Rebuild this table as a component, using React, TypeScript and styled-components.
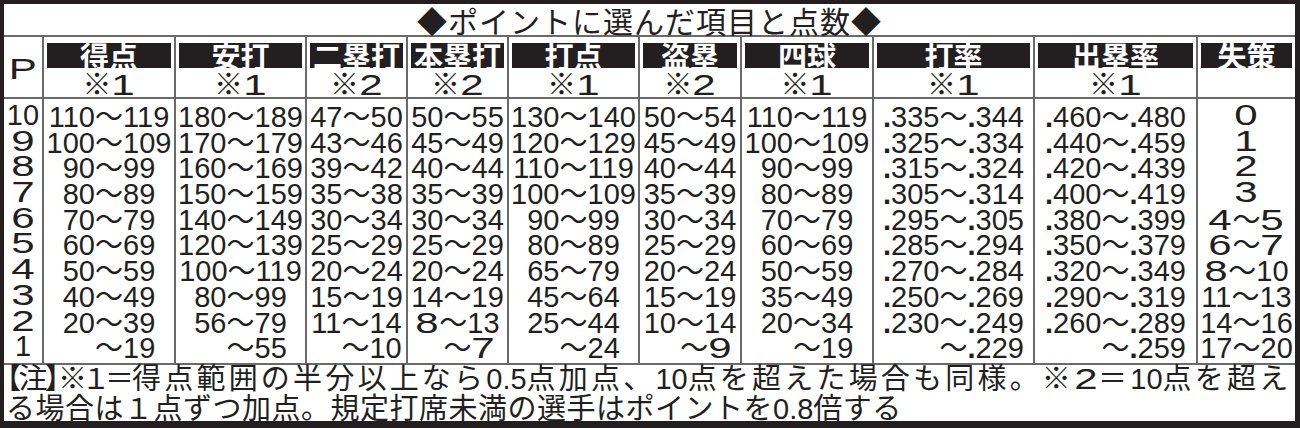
import React from "react";
import styled, { createGlobalStyle } from "styled-components";

const INK = "#231f20";
const RULE = "#6a6a6a";
const NUM = `"Liberation Sans Narrow", "Liberation Sans", Arial, sans-serif`;
const JP = `"Noto Sans CJK JP", "Noto Sans", sans-serif`;

type Column = {
  label: string;
  mark?: string;
  width: number;
  rows: string[];
};

// full-width digits (０-９) are drawn wide, like the paper's single-figure numbers
// "[x]" at the start of a cell is an invisible placeholder so "〜19" lines up
const POINTS = ["10", "９", "８", "７", "６", "５", "４", "３", "２", "1"];

const columns: Column[] = [
  {
    label: "得点",
    mark: "１",
    width: 132,
    rows: ["110〜119", "100〜109", "90〜99", "80〜89", "70〜79", "60〜69", "50〜59", "40〜49", "20〜39", "[20]〜19"],
  },
  {
    label: "安打",
    mark: "１",
    width: 131,
    rows: ["180〜189", "170〜179", "160〜169", "150〜159", "140〜149", "120〜139", "100〜119", "80〜99", "56〜79", "[56]〜55"],
  },
  {
    label: "二塁打",
    mark: "２",
    width: 101,
    rows: ["47〜50", "43〜46", "39〜42", "35〜38", "30〜34", "25〜29", "20〜24", "15〜19", "11〜14", "[11]〜10"],
  },
  {
    label: "本塁打",
    mark: "２",
    width: 101,
    rows: ["50〜55", "45〜49", "40〜44", "35〜39", "30〜34", "25〜29", "20〜24", "14〜19", "８〜13", "[８]〜７"],
  },
  {
    label: "打点",
    mark: "１",
    width: 131,
    rows: ["130〜140", "120〜129", "110〜119", "100〜109", "90〜99", "80〜89", "65〜79", "45〜64", "25〜44", "[25]〜24"],
  },
  {
    label: "盗塁",
    mark: "２",
    width: 102,
    rows: ["50〜54", "45〜49", "40〜44", "35〜39", "30〜34", "25〜29", "20〜24", "15〜19", "10〜14", "[10]〜９"],
  },
  {
    label: "四球",
    mark: "１",
    width: 132,
    rows: ["110〜119", "100〜109", "90〜99", "80〜89", "70〜79", "60〜69", "50〜59", "35〜49", "20〜34", "[20]〜19"],
  },
  {
    label: "打率",
    mark: "１",
    width: 161,
    rows: [".335〜.344", ".325〜.334", ".315〜.324", ".305〜.314", ".295〜.305", ".285〜.294", ".270〜.284", ".250〜.269", ".230〜.249", "[.230]〜.229"],
  },
  {
    label: "出塁率",
    mark: "１",
    width: 163,
    rows: [".460〜.480", ".440〜.459", ".420〜.439", ".400〜.419", ".380〜.399", ".350〜.379", ".320〜.349", ".290〜.319", ".260〜.289", "[.260]〜.259"],
  },
  {
    label: "失策",
    width: 99,
    rows: ["０", "１", "２", "３", "４〜５", "６〜７", "８〜10", "11〜13", "14〜16", "17〜20"],
  },
];

const digits = (s: string) =>
  Array.from(s).map((ch, i) => {
    const code = ch.charCodeAt(0);
    if (code >= 0xff10 && code <= 0xff19) {
      return (
        <WideBox key={i}>
          <WideGlyph>{String.fromCharCode(code - 0xfee0)}</WideGlyph>
        </WideBox>
      );
    }
    if (ch === ".") return <Dot key={i}>.</Dot>;
    return <React.Fragment key={i}>{ch}</React.Fragment>;
  });

const Range = ({ text }: { text: string }) => {
  const m = text.match(/^\[(.*?)\](.*)$/);
  const ghost = m ? m[1] : "";
  const rest = m ? m[2] : text;
  const [lo, hi] = rest.split("〜");
  return (
    <>
      {ghost && <Ghost>{digits(ghost)}</Ghost>}
      {lo && digits(lo)}
      {hi !== undefined && (
        <>
          <Tilde>〜</Tilde>
          {digits(hi)}
        </>
      )}
    </>
  );
};

export default function App() {
  return (
    <>
      <GlobalStyle />
      <Frame>
        <Title>◆ポイントに選んだ項目と点数◆</Title>
        <Table>
          <Col $width={38} $first>
            <PHead>
              <WideBox>
                <WideGlyph>P</WideGlyph>
              </WideBox>
            </PHead>
            <Body>
              {POINTS.map((p, i) => (
                <DataCell key={i}>{digits(p)}</DataCell>
              ))}
            </Body>
          </Col>
          {columns.map((c) => (
            <Col key={c.label} $width={c.width}>
              <Head>
                <Label>{c.label}</Label>
                <Mark>{c.mark && <>※{digits(c.mark)}</>}</Mark>
              </Head>
              <Body>
                {c.rows.map((r, i) => (
                  <DataCell key={i}>
                    <Range text={r} />
                  </DataCell>
                ))}
              </Body>
            </Col>
          ))}
        </Table>
        <Note>
          <NoteLine $spacing={3.2}>
            <Tight>【注】※１＝</Tight>得点範囲の半分以上なら<Num>0.5</Num>点加点、<Num>10</Num>
            点を超えた場合も同様。※{digits("２")}＝<Num>10</Num>点を超え
          </NoteLine>
          <NoteLine $spacing={0.5}>
            る場合は１点ずつ加点。規定打席未満の選手はポイントを<Num>0.8</Num>倍する
          </NoteLine>
        </Note>
      </Frame>
    </>
  );
}

const GlobalStyle = createGlobalStyle`
  html, body {
    margin: 0;
    padding: 0;
    background: #fff;
  }
  body {
    font-family: ${JP};
    color: ${INK};
  }
`;

const Frame = styled.div`
  width: 1300px;
  height: 428px;
  box-sizing: border-box;
  border-style: solid;
  border-color: ${INK};
  border-width: 4px 5px 7px 4px;
  display: flex;
  flex-direction: column;
  background: #fff;
  overflow: hidden;
`;

const Title = styled.div`
  height: 31px;
  border-bottom: 2px solid ${RULE};
  font-family: ${JP};
  font-size: 30px;
  line-height: 32px;
  letter-spacing: 1px;
  text-align: center;
  white-space: nowrap;
`;

const Table = styled.div`
  display: flex;
  height: 326px;
`;

const Col = styled.div<{ $width: number; $first?: boolean }>`
  width: ${({ $width }) => $width}px;
  box-sizing: border-box;
  border-left: ${({ $first }) => ($first ? "none" : `2px solid ${RULE}`)};
  display: flex;
  flex-direction: column;
`;

const Head = styled.div`
  height: 62px;
  box-sizing: border-box;
  border-bottom: 2px solid ${RULE};
  padding-top: 6px;
  display: flex;
  flex-direction: column;
`;

const PHead = styled(Head)`
  padding-top: 4px;
  align-items: center;
  justify-content: center;
  font-family: ${NUM};
  font-size: 29px;
`;

const Label = styled.div`
  margin: 0 3px;
  height: 25px;
  background: ${INK};
  color: #fff;
  font-family: ${JP};
  font-weight: 700;
  font-size: 29px;
  line-height: 25px;
  text-align: center;
  white-space: nowrap;
`;

const Mark = styled.div`
  height: 29px;
  font-family: ${JP};
  font-size: 29px;
  line-height: 29px;
  text-align: center;
  white-space: nowrap;
`;

const Body = styled.div`
  padding: 4px 0 3px;
  display: flex;
  flex-direction: column;
`;

const DataCell = styled.div`
  height: 25.7px;
  line-height: 25.7px;
  font-family: ${NUM};
  font-size: 29px;
  text-align: center;
  white-space: nowrap;
`;

const WideBox = styled.span`
  display: inline-block;
  width: 24px;
  text-align: center;
  font-family: ${NUM};
  letter-spacing: 0;
`;

const WideGlyph = styled.span`
  display: inline-block;
  transform: scaleX(1.45);
`;

const Dot = styled.span`
  font-weight: 700;
`;

const Ghost = styled.span`
  visibility: hidden;
`;

const Tilde = styled.span`
  font-family: ${JP};
  font-size: 28px;
`;

const Note = styled.div`
  flex: 1;
  border-top: 2px solid ${RULE};
  padding-left: 2px;
  font-family: ${JP};
  font-size: 29px;
  line-height: 27px;
  white-space: nowrap;
`;

const NoteLine = styled.div<{ $spacing: number }>`
  letter-spacing: ${({ $spacing }) => $spacing}px;
  &:first-child {
    margin-top: -2px;
  }
`;

const Tight = styled.span`
  font-feature-settings: "palt";
  letter-spacing: -2px;
`;

const Num = styled.span`
  font-family: ${NUM};
  font-size: 29px;
  letter-spacing: 0;
`;
